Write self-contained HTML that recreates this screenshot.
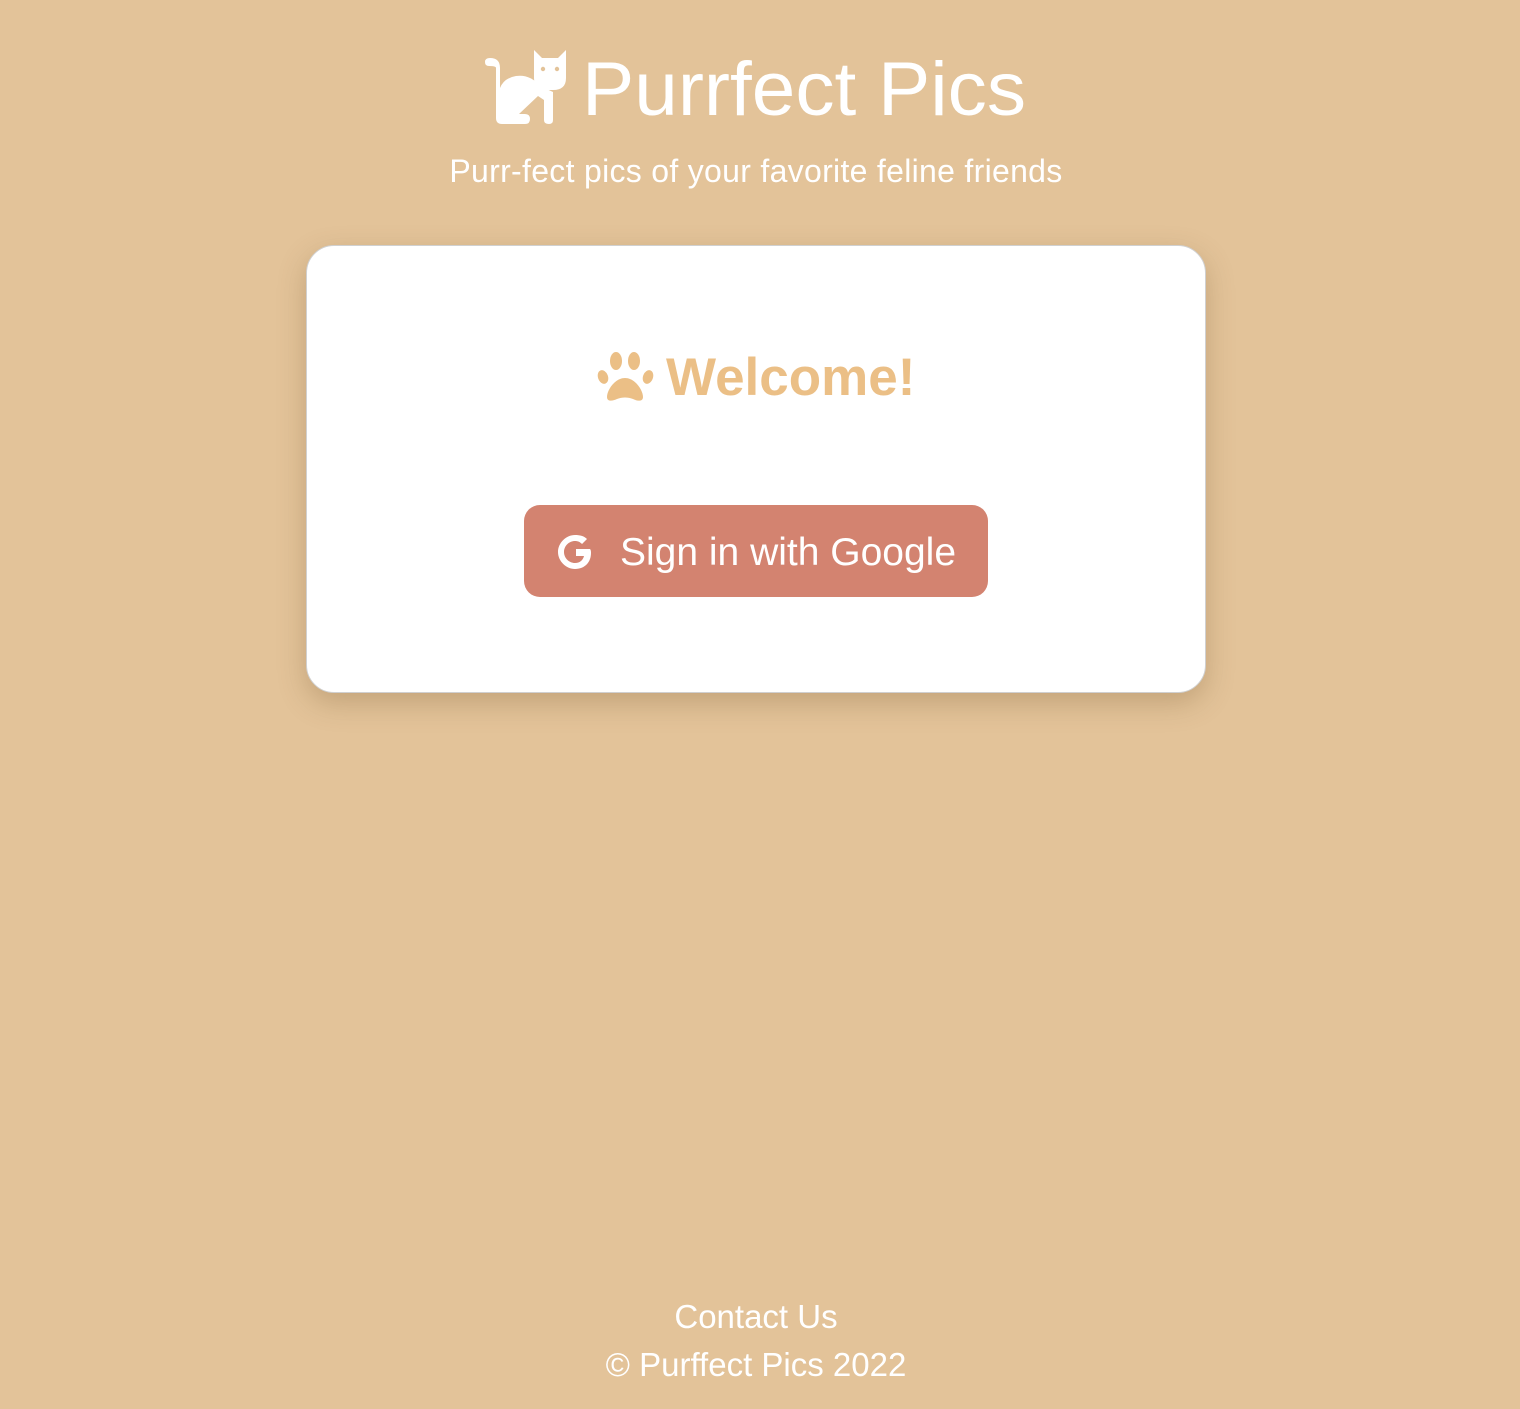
<!DOCTYPE html>
<html><head><style>
body{margin:0;background:#e3c399;font-family:"Liberation Sans",sans-serif;color:#fff;width:1520px;height:1409px;position:relative;overflow:hidden}
.t{position:absolute;left:0;width:1512px;text-align:center}
.card{position:absolute;left:306px;top:245px;width:898px;height:446px;background:#fff;border:1px solid #d0d0d0;border-radius:28px;box-shadow:0 10px 28px rgba(120,90,50,.3)}
.btn{position:absolute;left:524px;top:505px;width:464px;height:92px;background:#d38370;border-radius:16px}
</style></head><body>
<svg style="position:absolute;left:0;top:0" width="1520" height="140">
<g fill="#fff">
<path d="M496 68L496 118Q496 124 502 124L525 124Q530 124 530 119Q530 114 525 114L519 114L538 96L544 100L544 120Q544 124 549 124Q553 124 553 120L553 92L540 86Q530 74 516 76Q504 78 500 88L500 68Q500 58 490 58Q485 58 485 62Q485 66 489 66Q496 66 496 68Z"/>
<path d="M534 50L542 58H558L566 50V78Q566 90 553 90H547Q534 90 534 78Z"/>
</g>
<circle cx="543" cy="69" r="2.2" fill="#e3c399"/><circle cx="557" cy="69" r="2.2" fill="#e3c399"/>
<text x="582" y="115" font-size="76" fill="#fff" font-family="Liberation Sans" textLength="444" lengthAdjust="spacingAndGlyphs">Purrfect Pics</text>
</svg>
<div class="t" style="top:153px;font-size:32px;letter-spacing:0.3px">Purr-fect pics of your favorite feline friends</div>
<div class="card"></div>
<svg style="position:absolute;left:596px;top:348px" width="60" height="54" fill="#ebbf86">
<ellipse cx="20" cy="13" rx="6" ry="9"/><ellipse cx="38" cy="13" rx="6" ry="9"/>
<ellipse cx="7" cy="29" rx="5" ry="7" transform="rotate(-20 7 29)"/><ellipse cx="52" cy="29" rx="5" ry="7" transform="rotate(20 52 29)"/>
<path d="M29 30c-10 0-18 12-18 19 0 5 6 4 10 2 5-2 11-2 16 0 4 2 10 3 10-2 0-7-8-19-18-19z"/>
</svg>
<div style="position:absolute;left:666px;top:347px;font-size:53px;font-weight:bold;color:#ebbf86">Welcome!</div>
<div class="btn"></div>
<svg style="position:absolute;left:556px;top:532px" width="40" height="40" viewBox="0 0 40 40"><path d="M34 17H20v7h8c-1 4-4 7-9 7-6 0-11-5-11-11S13 9 19 9c3 0 5 1 7 3l5-5c-3-3-7-4-12-4C10 3 2 11 2 20s8 17 17 17c10 0 16-7 16-16 0-1 0-3-1-4z" fill="#fff"/></svg>
<div style="position:absolute;left:620px;top:531px;font-size:39px">Sign in with Google</div>
<div class="t" style="top:1298px;font-size:33px">Contact Us</div>
<div class="t" style="top:1346px;font-size:33px">© Purffect Pics 2022</div>
</body></html>
